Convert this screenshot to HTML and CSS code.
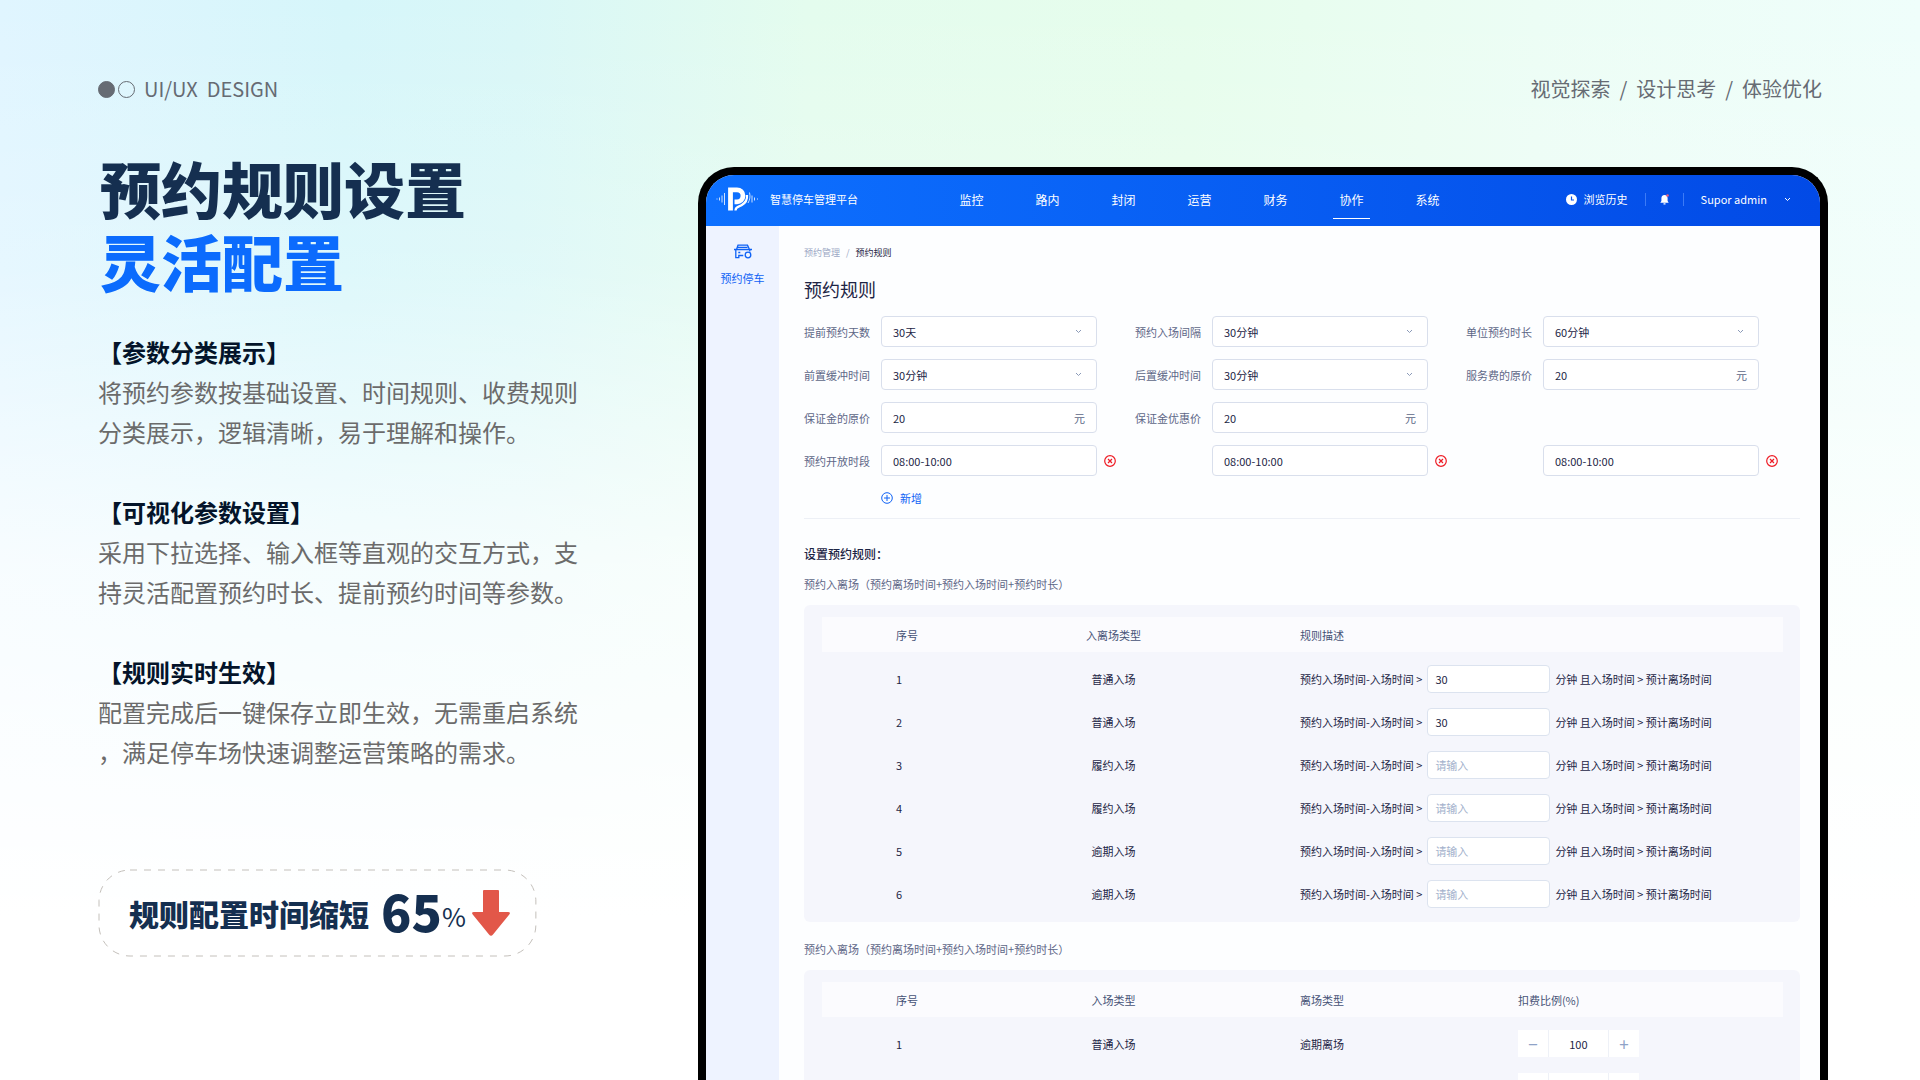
FILE: index.html
```html
<!DOCTYPE html>
<html lang="zh-CN">
<head>
<meta charset="UTF-8">
<meta name="viewport" content="width=device-width, initial-scale=1.0">
<title>预约规则设置</title>
<link rel="stylesheet" href="styles.css">
</head>
<body>
<div class="slide">
    <header class="slide-header">
        <div class="brand"><i class="dot dot-full"></i><i class="dot"></i><span>UI/UX&nbsp; DESIGN</span></div>
        <div class="tags">视觉探索&nbsp; /&nbsp; 设计思考&nbsp; /&nbsp; 体验优化</div>
    </header>

    <main class="slide-body">
        <section class="intro">
            <h1>预约规则设置<br><span>灵活配置</span></h1>
            <div class="points">
                <div class="point">
                    <h2>【参数分类展示】</h2>
                    <p>将预约参数按基础设置、时间规则、收费规则<br>分类展示，逻辑清晰，易于理解和操作。</p>
                </div>
                <div class="point">
                    <h2>【可视化参数设置】</h2>
                    <p>采用下拉选择、输入框等直观的交互方式，支<br>持灵活配置预约时长、提前预约时间等参数。</p>
                </div>
                <div class="point">
                    <h2>【规则实时生效】</h2>
                    <p>配置完成后一键保存立即生效，无需重启系统<br>，满足停车场快速调整运营策略的需求。</p>
                </div>
            </div>
            <div class="stat">
                <svg class="stat-border"><rect x="1" y="1" rx="31"/></svg>
                <span class="stat-label">规则配置时间缩短</span>
                <span class="stat-value">65</span>
                <span class="stat-unit">%</span>
                <svg class="stat-arrow" viewBox="0 0 38 46"><path d="M11 1q0-1 1-1h14q1 0 1 1v21h9q3 0 1.300 2.500L21 44.500q-2 2.500-4 0L.7 24.500Q-1 22 2 22h9z" fill="#e25749"/></svg>
            </div>
        </section>

        <section class="device">
            <header class="topbar">
                <svg class="logo" viewBox="0 0 42 24" fill="none" stroke="#fff">
                    <path d="M.5 12h1M3.500 10.500v3M6 8.500v7M8.500 6v12" stroke-width="1" opacity=".8"/>
                    <path d="M14.500 23.500V2.800h6.500a6 6 0 0 1 0 12h-2.500" stroke-width="4.800"/>
                    <path d="M19.500 23.500c0-4 3-3.500 6-5.200 4-2.300 6-5.800 5.500-10.300" stroke-width="2.200"/>
                    <path d="M33.500 5.500c1 4 .5 7-1.500 10.500M36 8.500v7M38.500 10.500v3M41 12h1" stroke-width="1" opacity=".8"/>
                </svg>
                <strong class="product">智慧停车管理平台</strong>
                <nav class="menu">
                    <a href="#">监控</a>
                    <a href="#">路内</a>
                    <a href="#">封闭</a>
                    <a href="#">运营</a>
                    <a href="#">财务</a>
                    <a href="#" class="active">协作</a>
                    <a href="#">系统</a>
                </nav>
                <div class="tools">
                    <a href="#" class="history">
                        <svg width="11" height="11" viewBox="0 0 11 11"><circle cx="5.500" cy="5.500" r="5.500" fill="#fff"/><path d="M5.500 2.500v3.500h2.500" fill="none" stroke="#0755ee" stroke-width="1.200"/></svg>
                        浏览历史
                    </a>
                    <button class="bell" aria-label="通知">
                        <svg width="9" height="11" viewBox="0 0 9 11"><path d="M4.500 1C2.500 1 1.400 2.300 1.400 4.300V7L.3 8.800h8.400L7.600 7V4.300C7.600 2.300 6.500 1 4.500 1z" fill="#fff"/><path d="M3.500 9.300h2V10.500h-2z" fill="#fff"/><circle cx="7.500" cy="1.500" r="1.300" fill="#f2617a"/></svg>
                    </button>
                    <button class="user">Supor admin
                        <svg width="7" height="5" viewBox="0 0 7 5"><path d="M1 1l2.500 2.500L6 1" fill="none" stroke="#fff"/></svg>
                    </button>
                </div>
            </header>

            <div class="workspace">
                <aside class="sidebar">
                    <a href="#">
                        <svg width="18" height="15" viewBox="0 0 18 15" fill="none" stroke="#0f62f5" stroke-width="1.300">
                            <path d="M2.500 5.500L4 1.200h9.500L15.500 5.500M4 3.300h9.500M0 5.500h18M1.800 5.500v8.200h3v-2.200h4.500M4.300 8.500h2M15.800 5.500v2"/>
                            <circle cx="14" cy="11" r="2.800"/>
                        </svg>
                        预约停车
                    </a>
                </aside>

                <div class="content">
                    <div class="crumbs"><a href="#">预约管理</a><span>/</span><b>预约规则</b></div>
                    <h3 class="page-title">预约规则</h3>

                    <form class="rules">
                        <div class="field">
                            <label for="days">提前预约天数</label>
                            <div class="control"><select id="days"><option>30天</option></select><svg class="caret" viewBox="0 0 7 5"><path d="M1 1l2.500 2.500L6 1"/></svg></div>
                        </div>
                        <div class="field">
                            <label for="interval">预约入场间隔</label>
                            <div class="control"><select id="interval"><option>30分钟</option></select><svg class="caret" viewBox="0 0 7 5"><path d="M1 1l2.500 2.500L6 1"/></svg></div>
                        </div>
                        <div class="field">
                            <label for="unit">单位预约时长</label>
                            <div class="control"><select id="unit"><option>60分钟</option></select><svg class="caret" viewBox="0 0 7 5"><path d="M1 1l2.500 2.500L6 1"/></svg></div>
                        </div>
                        <div class="field">
                            <label for="before">前置缓冲时间</label>
                            <div class="control"><select id="before"><option>30分钟</option></select><svg class="caret" viewBox="0 0 7 5"><path d="M1 1l2.500 2.500L6 1"/></svg></div>
                        </div>
                        <div class="field">
                            <label for="after">后置缓冲时间</label>
                            <div class="control"><select id="after"><option>30分钟</option></select><svg class="caret" viewBox="0 0 7 5"><path d="M1 1l2.500 2.500L6 1"/></svg></div>
                        </div>
                        <div class="field">
                            <label for="service">服务费的原价</label>
                            <div class="control"><input id="service" type="text" value="20"><span>元</span></div>
                        </div>
                        <div class="field">
                            <label for="deposit">保证金的原价</label>
                            <div class="control"><input id="deposit" type="text" value="20"><span>元</span></div>
                        </div>
                        <div class="field">
                            <label for="discount">保证金优惠价</label>
                            <div class="control"><input id="discount" type="text" value="20"><span>元</span></div>
                        </div>
                        <div class="field first-col">
                            <label for="slot1">预约开放时段</label>
                            <div class="control"><input id="slot1" type="text" value="08:00-10:00"></div>
                            <button type="button" class="remove" aria-label="删除时段"><svg viewBox="0 0 12 12"><circle cx="6" cy="6" r="5.300"/><path d="M4 4l4 4M8 4L4 8"/></svg></button>
                        </div>
                        <div class="field">
                            <div class="control"><input type="text" value="08:00-10:00" aria-label="预约开放时段二"></div>
                            <button type="button" class="remove" aria-label="删除时段"><svg viewBox="0 0 12 12"><circle cx="6" cy="6" r="5.300"/><path d="M4 4l4 4M8 4L4 8"/></svg></button>
                        </div>
                        <div class="field">
                            <div class="control"><input type="text" value="08:00-10:00" aria-label="预约开放时段三"></div>
                            <button type="button" class="remove" aria-label="删除时段"><svg viewBox="0 0 12 12"><circle cx="6" cy="6" r="5.300"/><path d="M4 4l4 4M8 4L4 8"/></svg></button>
                        </div>
                    </form>
                    <button type="button" class="add"><svg width="12" height="12" viewBox="0 0 12 12"><circle cx="6" cy="6" r="5.300"/><path d="M6 3v6M3 6h6"/></svg>新增</button>

                    <h4 class="section-title">设置预约规则：</h4>
                    <p class="note">预约入离场（预约离场时间+预约入场时间+预约时长）</p>
                    <div class="panel">
                        <table>
                            <thead>
                                <tr><th class="col-no">序号</th><th class="col-type">入离场类型</th><th class="col-desc">规则描述</th></tr>
                            </thead>
                            <tbody>
                                <tr><td class="col-no">1</td><td class="col-type">普通入场</td><td class="col-desc"><label for="r1">预约入场时间-入场时间 &gt;</label><input id="r1" type="text" placeholder="请输入" value="30"><span>分钟 且入场时间 &gt; 预计离场时间</span></td></tr>
                                <tr><td class="col-no">2</td><td class="col-type">普通入场</td><td class="col-desc"><label for="r2">预约入场时间-入场时间 &gt;</label><input id="r2" type="text" placeholder="请输入" value="30"><span>分钟 且入场时间 &gt; 预计离场时间</span></td></tr>
                                <tr><td class="col-no">3</td><td class="col-type">履约入场</td><td class="col-desc"><label for="r3">预约入场时间-入场时间 &gt;</label><input id="r3" type="text" placeholder="请输入"><span>分钟 且入场时间 &gt; 预计离场时间</span></td></tr>
                                <tr><td class="col-no">4</td><td class="col-type">履约入场</td><td class="col-desc"><label for="r4">预约入场时间-入场时间 &gt;</label><input id="r4" type="text" placeholder="请输入"><span>分钟 且入场时间 &gt; 预计离场时间</span></td></tr>
                                <tr><td class="col-no">5</td><td class="col-type">逾期入场</td><td class="col-desc"><label for="r5">预约入场时间-入场时间 &gt;</label><input id="r5" type="text" placeholder="请输入"><span>分钟 且入场时间 &gt; 预计离场时间</span></td></tr>
                                <tr><td class="col-no">6</td><td class="col-type">逾期入场</td><td class="col-desc"><label for="r6">预约入场时间-入场时间 &gt;</label><input id="r6" type="text" placeholder="请输入"><span>分钟 且入场时间 &gt; 预计离场时间</span></td></tr>
                            </tbody>
                        </table>
                    </div>

                    <p class="note">预约入离场（预约离场时间+预约入场时间+预约时长）</p>
                    <div class="panel">
                        <table>
                            <thead>
                                <tr><th class="col-no">序号</th><th class="col-type">入场类型</th><th class="col-leave">离场类型</th><th class="col-rate">扣费比例(%)</th></tr>
                            </thead>
                            <tbody>
                                <tr>
                                    <td class="col-no">1</td><td class="col-type">普通入场</td><td class="col-leave">逾期离场</td>
                                    <td class="col-rate"><div class="stepper"><button type="button" aria-label="减少">−</button><input type="text" value="100" aria-label="扣费比例"><button type="button" aria-label="增加">+</button></div></td>
                                </tr>
                                <tr>
                                    <td class="col-no"></td><td class="col-type"></td><td class="col-leave"></td>
                                    <td class="col-rate"><div class="stepper"><button type="button" aria-label="减少"></button><input type="text" aria-label="扣费比例"><button type="button" aria-label="增加"></button></div></td>
                                </tr>
                            </tbody>
                        </table>
                    </div>
                </div>
            </div>
        </section>
    </main>
</div>
</body>
</html>
```
FILE: styles.css
```css
* {
    box-sizing: border-box;
}
body {
    margin: 0;
    font-family: "Noto Sans CJK SC", "Noto Sans", sans-serif;
    color: #1d2545;
}
h1, h2, h3, h4, p {
    margin: 0;
}
a {
    color: inherit;
    text-decoration: none;
}
button, input, select {
    font: inherit;
    color: inherit;
}
button {
    padding: 0;
    border: none;
    background: none;
    cursor: pointer;
}
.slide {
    height: 100vh;
    overflow: hidden;
    padding: 75px 92px 0 98px;
    background:
        linear-gradient(180deg, rgba(255,255,255,0) 0%, rgba(255,255,255,0.2) 25%, rgba(255,255,255,0.75) 52%, #fff 85%),
        linear-gradient(90deg, #e0f5ff 0%, #d6f6fa 18%, #d9f7f7 27%, #e4fcee 42%, #e6fdec 62%, #ecfdf5 80%, #effefb 100%);
}

/* slide header */
.slide-header {
    display: flex;
    justify-content: space-between;
    height: 76px;
    padding-right: 6px;
    font-size: 20px;
    line-height: 28px;
    color: #666b73;
}
.brand {
    display: flex;
    align-items: center;
    gap: 3px;
    height: 28px;
}
.brand span {
    margin-left: 6px;
}
.dot {
    width: 17px;
    height: 17px;
    border: 1px solid #666b73;
    border-radius: 50%;
}
.dot-full {
    background: #666b73;
}
.slide-body {
    display: grid;
    grid-template-columns: 600px 1fr;
    align-items: start;
}

/* left column */
h1 {
    padding-left: 2px;
    font-size: 61px;
    line-height: 73px;
    font-weight: 900;
    color: #152f50;
}
h1 span {
    color: #0b6bfd;
}
.points {
    display: grid;
    gap: 40px;
    margin-top: 35px;
    font-size: 24px;
    line-height: 40px;
    color: #6b6b6b;
    white-space: nowrap;
}
h2 {
    font-size: 24px;
    font-weight: 700;
    color: #04142a;
}
.stat {
    position: relative;
    display: inline-flex;
    align-items: center;
    height: 88px;
    margin-top: 97px;
    padding: 0 27px 0 31px;
    color: #152f50;
}
.stat-border {
    position: absolute;
    inset: 0;
    width: 100%;
    height: 100%;
}
.stat-border rect {
    width: calc(100% - 2px);
    height: calc(100% - 2px);
    fill: none;
    stroke: #c4c0bb;
    stroke-dasharray: 7 7;
}
.stat-label {
    font-size: 30px;
    font-weight: 900;
}
.stat-value {
    margin-left: 12px;
    padding-bottom: 6px;
    font-size: 50px;
    line-height: 60px;
    font-weight: 900;
}
.stat-unit {
    padding-top: 4px;
    font-size: 26px;
}
.stat-arrow {
    width: 38px;
    height: 46px;
    margin-left: 6px;
}

/* device */
.device {
    margin-top: 16px;
    border: 8px solid #000;
    border-bottom: none;
    border-radius: 36px 36px 0 0;
    background: #fdfeff;
    overflow: hidden;
    font-size: 11px;
    line-height: 16px;
}
.topbar {
    display: flex;
    align-items: center;
    height: 51px;
    padding: 0 29px 3px 10px;
    background: linear-gradient(90deg, #0d70ff, #024ae6);
    color: #fff;
}
.logo {
    width: 42px;
    height: 24px;
}
.product {
    margin-left: 12px;
    font-weight: 400;
}
.menu {
    display: flex;
    gap: 39px;
    margin-left: 95px;
    font-size: 12px;
}
.menu a {
    width: 37px;
    padding: 12px 0 10px;
    border-bottom: 1px solid transparent;
    text-align: center;
}
.menu .active {
    border-color: #fff;
}
.tools {
    display: flex;
    align-items: center;
    margin-left: auto;
}
.history {
    display: flex;
    align-items: center;
    gap: 7px;
    padding-right: 17px;
}
.bell {
    display: flex;
    padding: 1px 14px;
    border: solid #3c7bf6;
    border-width: 0 1px;
}
.user {
    display: flex;
    align-items: center;
    gap: 17px;
    padding-left: 17px;
}
.workspace {
    display: flex;
}
.sidebar {
    width: 73px;
    flex: none;
    padding-top: 18px;
    background: #eef3ff;
    color: #0f62f5;
}
.sidebar a {
    display: flex;
    flex-direction: column;
    align-items: center;
    gap: 11px;
}
.content {
    flex: 1;
    padding: 19px 20px 0 25px;
}
.crumbs {
    display: flex;
    gap: 6px;
    font-size: 9px;
    color: #9aa7c4;
}
.crumbs b {
    font-weight: 400;
    color: #1d2545;
}
.page-title {
    margin-top: 16px;
    font-size: 18px;
    line-height: 24px;
    font-weight: 400;
}

/* form */
.rules {
    display: grid;
    grid-template-columns: repeat(3, 1fr);
    gap: 12px 0;
    padding-right: 3px;
    margin-top: 15px;
}
.field {
    display: grid;
    grid-template-columns: 77px 216px 1fr;
    align-items: center;
}
.field label {
    color: #5d6787;
}
.first-col {
    grid-column: 1;
}
.control {
    grid-column: 2;
    position: relative;
    display: flex;
    align-items: center;
    height: 31px;
    border: 1px solid #d9dfec;
    border-radius: 4px;
    background: #fff;
}
.control input, .control select {
    flex: 1;
    min-width: 0;
    height: 100%;
    padding: 0 11px;
    border: none;
    background: none;
    appearance: none;
}
.control span {
    padding-right: 11px;
    color: #5d6787;
}
.caret {
    position: absolute;
    right: 14px;
    width: 7px;
    height: 5px;
    fill: none;
    stroke: #8b9ab8;
    pointer-events: none;
}
.remove {
    display: flex;
    width: 12px;
    margin-left: 7px;
}
.remove svg {
    width: 12px;
    height: 12px;
    fill: none;
    stroke: #ee1c25;
    stroke-width: 1.2;
}
.add {
    display: flex;
    align-items: center;
    gap: 7px;
    margin: 14px 0 0 77px;
    color: #0f62f5;
}
.add svg {
    fill: none;
    stroke: #0f62f5;
}
.section-title {
    margin-top: 12px;
    padding-top: 27px;
    border-top: 1px solid #edf0f6;
    font-size: 12px;
    font-weight: 500;
}
.note {
    margin: 14px 0 13px;
    color: #5d6787;
}
.panel + .note {
    margin-top: 19px;
}

/* tables */
.panel {
    padding: 12px 17px 7px 18px;
    border-radius: 6px;
    background: #f5f6fc;
}
table {
    width: 100%;
    border-collapse: collapse;
    table-layout: fixed;
}
th, td {
    height: 43px;
    padding: 0;
    text-align: left;
}
th {
    height: 35px;
    font-weight: 400;
    color: #465276;
    background: #fbfbfe;
}
tbody::before {
    content: "";
    display: block;
    height: 5px;
}
.col-no {
    width: 20%;
    padding-left: 74px;
}
.col-type {
    width: 21%;
    padding-right: 3px;
    text-align: center;
}
.col-desc, .col-leave {
    padding-left: 84px;
}
.col-leave {
    width: 31%;
}
.col-rate {
    padding-left: 4px;
}
td input {
    width: 123px;
    height: 28px;
    margin: 0 5px;
    padding: 0 7px;
    border: 1px solid #dce3ef;
    border-radius: 4px;
    background: #fff;
}
td input::placeholder {
    color: #a3b1cc;
}
.stepper {
    display: flex;
    width: 121px;
    height: 27px;
    background: #fff;
}
.stepper button {
    width: 30px;
    font-size: 17px;
    color: #8fa3c7;
}
.stepper input {
    flex: 1;
    width: 60px;
    height: 27px;
    margin: 0;
    padding: 0;
    border: solid #eef1f7;
    border-width: 0 1px;
    border-radius: 0;
    text-align: center;
}
```
